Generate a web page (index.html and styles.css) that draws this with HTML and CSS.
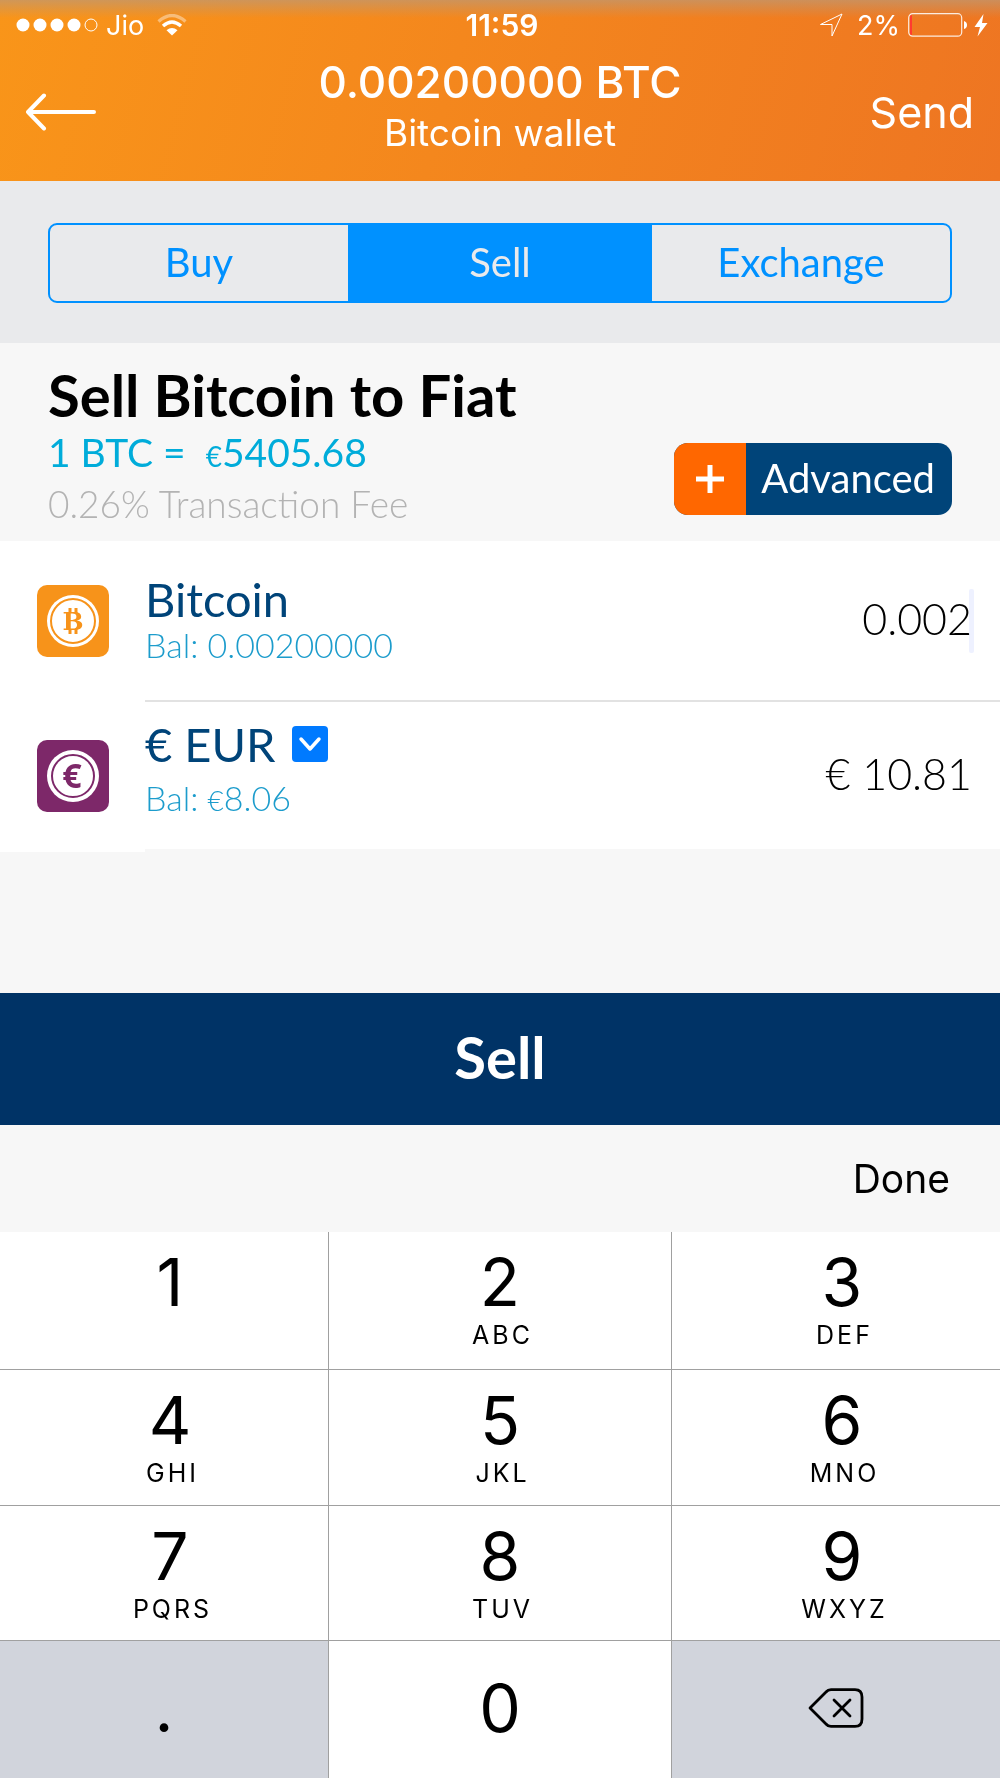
FILE: index.html
```html
<!DOCTYPE html>
<html lang="en">
<head>
<meta charset="utf-8">
<meta name="viewport" content="width=device-width, initial-scale=1">
<title>Bitcoin wallet</title>
<link rel="stylesheet" href="styles.css">
</head>
<body>
<header class="header">
  <div class="status">
    <div class="status-left">
      <svg class="signal" width="82" height="14" viewBox="0 0 82 14" aria-hidden="true">
        <g fill="#fff"><circle cx="7" cy="7" r="6.5"/><circle cx="24" cy="7" r="6.5"/><circle cx="41" cy="7" r="6.5"/><circle cx="58" cy="7" r="6.5"/></g>
        <circle cx="75" cy="7" r="6" fill="none" stroke="#fff" stroke-width="1"/>
      </svg>
      <span class="carrier">Jio</span>
      <svg class="wifi" width="30" height="22" viewBox="0 0 30 22" aria-hidden="true">
        <path d="M1.500 7.500Q15-4.500 28.500 7.500" fill="none" stroke="#fff" stroke-opacity=".4" stroke-width="3.200"/>
        <path d="M6 12Q15 4 24 12" fill="none" stroke="#fff" stroke-width="3.400"/>
        <path d="M9.500 16.200Q15 11.800 20.500 16.200L15 21.500Z" fill="#fff"/>
      </svg>
    </div>
    <span class="clock">11:59</span>
    <div class="status-right">
      <svg class="location" width="24" height="24" viewBox="0 0 24 24" fill="none" stroke="#fff" stroke-width="1" aria-hidden="true"><path d="M23 1L1.500 11.500H13V23Z"/></svg>
      <span>2%</span>
      <svg class="battery" width="60" height="24" viewBox="0 0 60 24" aria-hidden="true">
        <rect x=".7" y=".7" width="53" height="22.500" rx="4" fill="none" stroke="#fff" stroke-opacity=".85" stroke-width="1.200"/>
        <path d="M2 3.500Q2 2 4 2V22Q2 22 2 20.500Z" fill="#ff3b30"/>
        <path d="M56 8Q59 9 59 12T56 16Z" fill="#fff"/>
      </svg>
      <svg class="bolt" width="14" height="24" viewBox="0 0 14 24" aria-hidden="true"><path d="M9.500 1L.5 14H6L3.500 23.500L13.500 10H8Z" fill="#fff"/></svg>
    </div>
  </div>
  <nav class="nav">
    <button class="back" type="button" aria-label="Back">
      <svg width="70" height="38" viewBox="0 0 70 38" fill="none" stroke="#fff" stroke-width="4" stroke-linecap="round" stroke-linejoin="round" aria-hidden="true"><path d="M18 2.500L2 19L18 35.500M2 19H68"/></svg>
    </button>
    <div class="titles">
      <h1 class="balance">0.00200000 BTC</h1>
      <p class="wallet">Bitcoin wallet</p>
    </div>
    <a class="send" href="#send">Send</a>
  </nav>
</header>

<main class="main">
  <div class="tabs">
    <div class="segmented" role="group" aria-label="Action">
      <button class="segment" type="button">Buy</button>
      <button class="segment active" type="button" aria-pressed="true">Sell</button>
      <button class="segment" type="button">Exchange</button>
    </div>
  </div>

  <section class="summary">
    <div>
      <h2 class="summary-title">Sell Bitcoin to Fiat</h2>
      <p class="rate">1 BTC = &nbsp;<span class="unit">€</span>5405.68</p>
      <p class="fee">0.26% Transaction Fee</p>
    </div>
    <button class="advanced" type="button">
      <span class="plus"><svg width="30" height="30" viewBox="0 0 30 30" stroke="#fff" stroke-width="5" aria-hidden="true"><path d="M15 1V29M1 15H29"/></svg></span>
      <span class="advanced-label">Advanced</span>
    </button>
  </section>

  <form class="accounts">
    <div class="account">
      <svg class="coin" width="72" height="72" viewBox="0 0 72 72" aria-hidden="true">
        <rect width="72" height="72" rx="10" fill="#f7931a"/>
        <circle cx="36" cy="36" r="26" fill="#fff"/>
        <circle cx="36" cy="36" r="22" fill="none" stroke="#f7931a" stroke-width="2"/>
        <path d="M33 23V28M39 23V28M33 44V49M39 44V49" stroke="#f7931a" stroke-width="3"/>
        <text class="coin-b" x="36" y="45" text-anchor="middle" fill="#f7931a">B</text>
      </svg>
      <div class="account-body first">
        <div class="account-info">
          <label class="account-name" for="btc">Bitcoin</label>
          <p class="account-bal">Bal: 0.00200000</p>
        </div>
        <div class="amount-box">
          <input class="amount" id="btc" type="text" inputmode="decimal" value="0.002">
          <span class="caret"></span>
        </div>
      </div>
    </div>
    <div class="account">
      <svg class="coin" width="72" height="72" viewBox="0 0 72 72" aria-hidden="true">
        <rect width="72" height="72" rx="10" fill="#7d2869"/>
        <circle cx="36" cy="36" r="26" fill="#fff"/>
        <circle cx="36" cy="36" r="21" fill="none" stroke="#7d2869" stroke-width="2"/>
        <text class="coin-e" x="35" y="48" text-anchor="middle" fill="#7d2869">€</text>
      </svg>
      <div class="account-body second">
        <div class="account-info">
          <div class="picker">
            <select class="account-name currency" id="currency" aria-label="Currency"><option>€ EUR</option></select>
            <label for="currency" class="picker-icon"><svg width="36" height="36" viewBox="0 0 36 36" aria-hidden="true"><rect width="36" height="36" rx="4" fill="#007aff"/><path d="M9 13L18 23L27 13" fill="none" stroke="#fff" stroke-width="3.500" stroke-linecap="round" stroke-linejoin="round"/></svg></label>
          </div>
          <p class="account-bal">Bal: <span class="unit">€</span>8.06</p>
        </div>
        <div class="amount-box">
          <input class="amount" type="text" inputmode="decimal" aria-label="Amount in EUR" value="€ 10.81">
        </div>
      </div>
    </div>
  </form>
</main>

<button class="sell" type="button">Sell</button>

<section class="keyboard" aria-label="Keypad">
  <div class="toolbar"><button class="done" type="button">Done</button></div>
  <div class="keys">
    <button class="key" type="button">1</button>
    <button class="key" type="button">2<span class="letters">ABC</span></button>
    <button class="key" type="button">3<span class="letters">DEF</span></button>
    <button class="key" type="button">4<span class="letters">GHI</span></button>
    <button class="key" type="button">5<span class="letters">JKL</span></button>
    <button class="key" type="button">6<span class="letters">MNO</span></button>
    <button class="key" type="button">7<span class="letters">PQRS</span></button>
    <button class="key" type="button">8<span class="letters">TUV</span></button>
    <button class="key" type="button">9<span class="letters">WXYZ</span></button>
    <button class="key low gray" type="button">.</button>
    <button class="key low" type="button">0</button>
    <button class="key low gray" type="button" aria-label="Delete">
      <svg width="56" height="40" viewBox="0 0 56 40" fill="none" stroke="#000" stroke-width="2.800" stroke-linecap="round" stroke-linejoin="round" aria-hidden="true"><path d="M2 20L18 4Q20 1.600 23 1.600H47Q54 1.600 54 9V31Q54 38.400 47 38.400H23Q20 38.400 18 36Z"/><path d="M26 12L42 28M42 12L26 28"/></svg>
    </button>
  </div>
</section>
</body>
</html>
```
FILE: styles.css
```css
* {
  box-sizing: border-box;
}

body {
  margin: 0;
  min-height: 100vh;
  display: flex;
  flex-direction: column;
  background: #f7f7f7;
  color: #000;
  font-family: Lato, "Open Sans", sans-serif;
}

h1, h2, p {
  margin: 0;
}

button, input, select {
  margin: 0;
  padding: 0;
  border: 0;
  border-radius: 0;
  background: none;
  color: inherit;
  font: inherit;
}

svg {
  display: block;
  flex: none;
}

/* Header */
.header {
  background:
    linear-gradient(to bottom, rgba(190, 152, 115, .7), rgba(190, 152, 115, 0) 18px),
    linear-gradient(105deg, #f99519 0%, #f4871d 45%, #ee7522 100%);
  color: #fff;
  font-family: Inter, "Liberation Sans", sans-serif;
}

.status {
  display: grid;
  grid-template-columns: 1fr auto 1fr;
  align-items: center;
  height: 50px;
  padding: 0 12px 0 16px;
  font-size: 27px;
}

.status-left,
.status-right {
  display: flex;
  align-items: center;
}

.status-right {
  justify-content: flex-end;
}

.carrier {
  margin: 0 13px 0 8px;
}

.clock {
  font-size: 30px;
  font-weight: 600;
}

.location {
  margin-right: 14px;
}

.battery {
  margin: 0 6px 0 8px;
}

.nav {
  display: grid;
  grid-template-columns: 1fr auto 1fr;
  align-items: center;
  height: 131px;
  padding: 6px 26px 13px;
}

.back {
  justify-self: start;
}

.titles {
  align-self: start;
  text-align: center;
}

.balance {
  font-size: 44px;
  font-weight: 500;
  line-height: 52px;
}

.wallet {
  font-size: 37px;
  line-height: 50px;
}

.send {
  justify-self: end;
  color: #fff;
  font-size: 43px;
  text-decoration: none;
}

/* Action tabs */
.tabs {
  padding: 42px 48px 40px;
  background: #e9eaec;
}

.segmented {
  display: grid;
  grid-template-columns: 298fr 304fr 298fr;
  height: 80px;
  border: 2px solid #0091ff;
  border-radius: 9px;
  overflow: hidden;
}

.segment {
  padding-bottom: 2px;
  color: #0091ff;
  font-size: 40px;
}

.segment.active {
  background: #0091ff;
  color: #e9eaec;
}

/* Rate summary */
.summary {
  display: flex;
  justify-content: space-between;
  align-items: flex-end;
  padding: 22px 48px 12px;
}

.summary-title {
  font-size: 58px;
  font-weight: 700;
  line-height: 60px;
}

.rate {
  color: #00acda;
  font-size: 39px;
  line-height: 54px;
}

.unit {
  font-size: 28px;
  line-height: 28px;
}

.fee {
  color: #b3b3b3;
  font-size: 37px;
  font-weight: 300;
  line-height: 50px;
}

.advanced {
  display: flex;
  height: 72px;
  margin-bottom: 14px;
  border-radius: 14px;
  overflow: hidden;
  background: #004479;
  color: #fff;
  font-size: 40px;
}

.plus {
  display: flex;
  align-items: center;
  justify-content: center;
  width: 72px;
  height: 72px;
  background: #ff6700;
}

.advanced-label {
  padding: 0 17px 0 15px;
  line-height: 70px;
}

/* Accounts */
.accounts {
  margin-bottom: 141px;
  background: #fff;
}

.account {
  display: flex;
  align-items: flex-start;
  padding-left: 37px;
}

.coin {
  margin-top: 44px;
}

.account + .account .coin {
  margin-top: 38px;
}

.coin-b {
  font: 700 25px "DejaVu Serif", serif;
}

.coin-e {
  font: 700 34px "Noto Sans", sans-serif;
}

.account-body {
  flex: 1;
  display: flex;
  justify-content: space-between;
  align-items: center;
  margin-left: 36px;
  padding-right: 28px;
}

.first {
  height: 161px;
  border-bottom: 2px solid #e2e2e2;
}

.second {
  height: 150px;
  border-bottom: 3px solid #f7f7f7;
}

.second .account-info {
  padding-bottom: 11px;
}

.account-name {
  display: block;
  color: #004479;
  font-size: 47px;
  line-height: 48px;
}

.account-bal {
  color: #1c9ccc;
  font-size: 34px;
  font-weight: 300;
  line-height: 44px;
}

.picker {
  display: flex;
  align-items: center;
  gap: 16px;
  margin-bottom: 8px;
}

.currency {
  appearance: none;
}

.amount-box {
  position: relative;
}

.amount {
  display: block;
  width: 280px;
  padding-bottom: 4px;
  font-size: 43px;
  font-weight: 300;
  line-height: 60px;
  text-align: right;
}

.caret {
  position: absolute;
  top: 0;
  right: -2px;
  width: 5px;
  height: 100%;
  border-radius: 2px;
  background: #eef1ff;
  mix-blend-mode: multiply;
}

/* Primary action */
.sell {
  height: 132px;
  padding-bottom: 6px;
  background: #003366;
  color: #fff;
  font-size: 58px;
  font-weight: 700;
}

/* Keypad */
.keyboard {
  font-family: Inter, "Liberation Sans", sans-serif;
}

.toolbar {
  display: flex;
  justify-content: flex-end;
  height: 107px;
  padding-right: 50px;
  background: #f7f7f7;
  font-size: 39px;
}

.keys {
  display: grid;
  grid-template-columns: 328fr 342fr 328fr;
  grid-template-rows: 137px 135px 134px 1fr;
  gap: 1px;
  min-height: 546px;
  background: #a0a0a0;
}

.key {
  display: flex;
  flex-direction: column;
  align-items: center;
  padding: 12px 0 0;
  background: #fff;
  font-size: 66px;
  line-height: 76px;
}

.key:not(.low):not(:nth-child(3n + 2)) {
  padding-left: 12px;
}

.letters {
  padding-left: 5px;
  font-size: 25px;
  line-height: 30px;
  letter-spacing: 3px;
}

.key.low {
  justify-content: center;
  padding: 0 0 3px;
}

.gray {
  background: #d1d4dc;
}
```
